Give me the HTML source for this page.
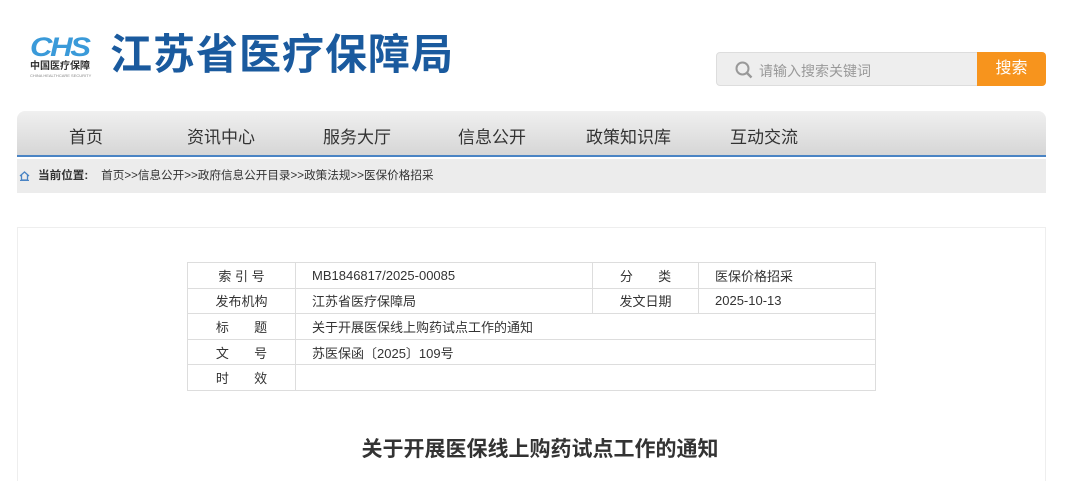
<!DOCTYPE html>
<html><head><meta charset="utf-8"><style>
*{margin:0;padding:0;box-sizing:border-box}
html,body{width:1080px;height:481px;overflow:hidden}
body{background:#fff;font-family:"Liberation Sans","Noto Sans CJK SC",sans-serif;position:relative}
.abs{position:absolute}
.logo{left:30px;top:34px}
.title{left:110px;top:29px;font-size:42px;font-weight:bold;color:#1a5a9e;letter-spacing:1px;line-height:52px}
.search{left:716px;top:52px;width:262px;height:34px;background:#eee;border:1px solid #ddd;border-radius:4px 0 0 4px}
.search span{position:absolute;left:42px;top:8px;font-size:14px;color:#999}
.btn{left:977px;top:52px;width:69px;height:34px;background:#f7941d;color:#fff;font-size:16px;text-align:center;line-height:34px;border-radius:0 4px 4px 0}
.nav{left:17px;top:111px;width:1029px;height:46px;background:linear-gradient(#f0f0f0,#d6d6d6);border-radius:8px 8px 0 0;border-bottom:2px solid #4a84c4}
.nav span{position:absolute;top:12px;font-size:17px;color:#333}
.bc{left:17px;top:159px;width:1029px;height:34px;background:#ececec;font-size:11.6px;color:#333;line-height:34px;padding-left:21px}
.box{left:17px;top:227px;width:1029px;height:270px;border:1px solid #eee}
table{position:absolute;left:187px;top:262px;border-collapse:collapse;font-size:13px;color:#333}
td{border:1px solid #ddd;height:25.6px;padding:0 16px}
td.l{text-align:center;padding:0}
.h{left:0;width:1080px;top:433px;text-align:center;font-size:21px;font-weight:bold;color:#333}
</style></head><body>
<div class="abs logo">
<div style="font-size:27px;font-weight:bold;font-style:italic;color:#3a9ad9;letter-spacing:-2px;line-height:26px;transform:scaleX(1.15);transform-origin:left">CHS</div>
<div style="font-size:10px;color:#333;font-weight:bold;line-height:13px">中国医疗保障</div>
<div style="font-size:4px;color:#888;line-height:5px">CHINA HEALTHCARE SECURITY</div>
</div>
<div class="abs title">江苏省医疗保障局</div>
<div class="abs search"><svg style="position:absolute;left:18px;top:8px" width="18" height="18" viewBox="0 0 18 18"><circle cx="7.5" cy="7.5" r="6" fill="none" stroke="#999" stroke-width="2"/><path d="M12 12l4.5 4.5" stroke="#999" stroke-width="2.4"/></svg><span>请输入搜索关键词</span></div>
<div class="abs btn">搜索</div>
<div class="abs nav"><span style="left:52px">首页</span><span style="left:170px">资讯中心</span><span style="left:306px">服务大厅</span><span style="left:441px">信息公开</span><span style="left:569px">政策知识库</span><span style="left:713px">互动交流</span></div>
<div class="abs bc"><svg style="position:absolute;left:2px;top:12px" width="11" height="10" viewBox="0 0 11 10"><path d="M1 5L5.5 1 10 5M2.5 4v5h6V4M1 9.5h9" fill="none" stroke="#4a84c4" stroke-width="1.3"/></svg><b style="font-weight:bold">当前位置:</b>&nbsp;&nbsp;&nbsp;&nbsp;首页&gt;&gt;信息公开&gt;&gt;政府信息公开目录&gt;&gt;政策法规&gt;&gt;医保价格招采</div>
<div class="abs box"></div>
<table>
<tr><td class="l" style="width:108px">索 引 号</td><td style="width:297px">MB1846817/2025-00085</td><td class="l" style="width:106px">分&nbsp;&nbsp;&nbsp;&nbsp;&nbsp;&nbsp;&nbsp;类</td><td style="width:177px">医保价格招采</td></tr>
<tr><td class="l">发布机构</td><td>江苏省医疗保障局</td><td class="l">发文日期</td><td>2025-10-13</td></tr>
<tr><td class="l">标&nbsp;&nbsp;&nbsp;&nbsp;&nbsp;&nbsp;&nbsp;题</td><td colspan="3">关于开展医保线上购药试点工作的通知</td></tr>
<tr><td class="l">文&nbsp;&nbsp;&nbsp;&nbsp;&nbsp;&nbsp;&nbsp;号</td><td colspan="3">苏医保函〔2025〕109号</td></tr>
<tr><td class="l">时&nbsp;&nbsp;&nbsp;&nbsp;&nbsp;&nbsp;&nbsp;效</td><td colspan="3"></td></tr>
</table>
<div class="abs h">关于开展医保线上购药试点工作的通知</div>
</body></html>
